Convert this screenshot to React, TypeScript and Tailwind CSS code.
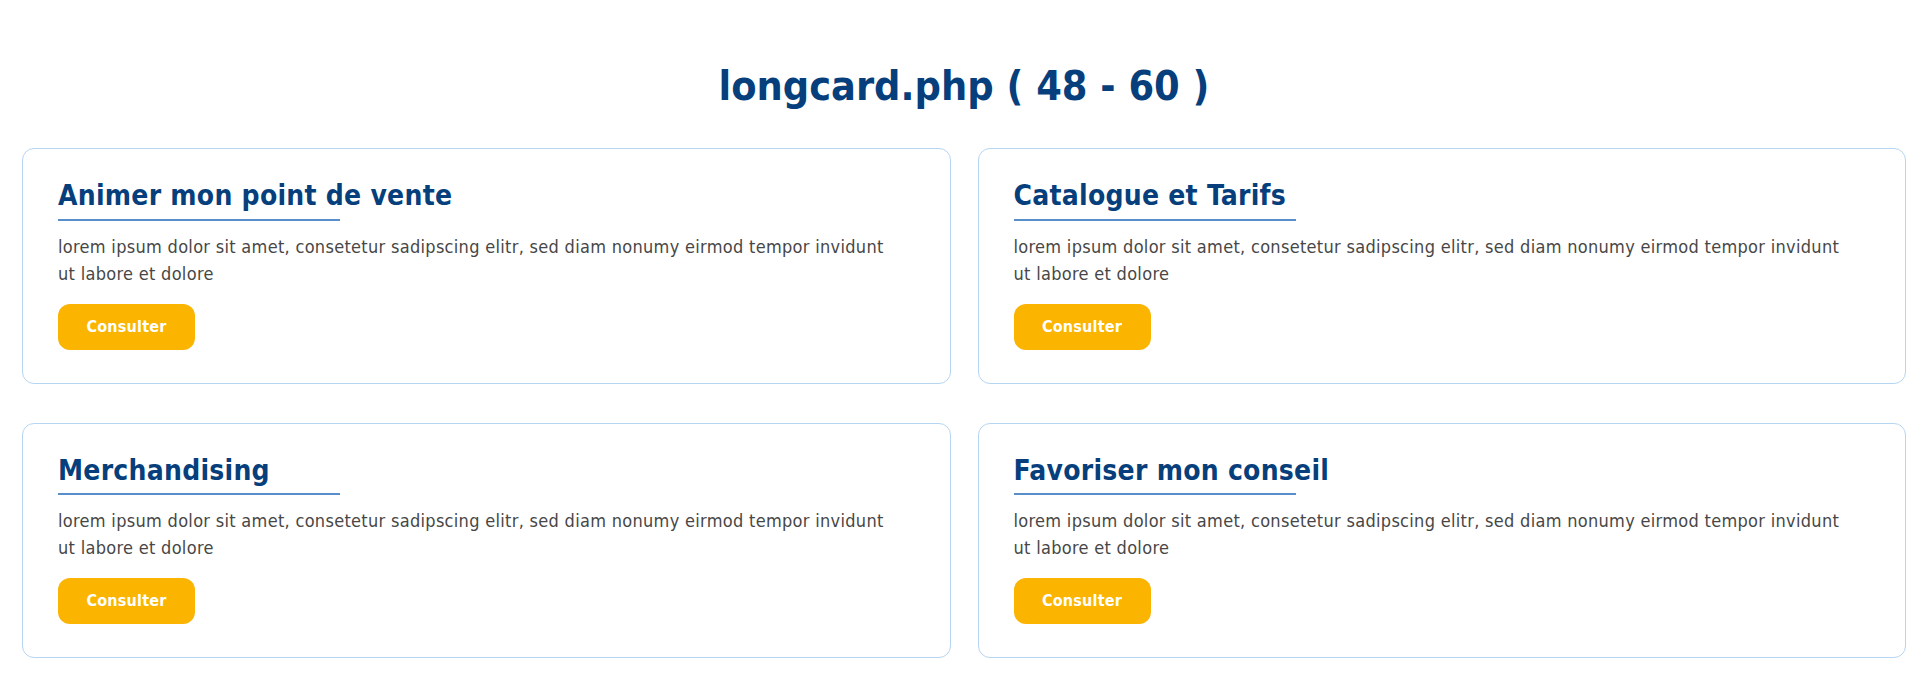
import React from "react";

const cards = [
  "Animer mon point de vente",
  "Catalogue et Tarifs",
  "Merchandising",
  "Favoriser mon conseil",
];

function Card({ title }: { title: string }) {
  return (
    <div className="rounded-[12px] border border-[#b5d5f3] bg-white pl-[35px] pr-[35px] pt-[30px] pb-[33px]">
      <h2 className="text-[28px] font-bold leading-[1.2] tracking-[0.25px] text-[#073f7c]">{title}</h2>
      <div className="mt-[6px] h-[2px] w-[282px] bg-[#5a8ecb]" />
      <p className="mt-[12px] text-[18px] leading-[27px] tracking-[0.3px] text-[#474747]">
        lorem ipsum dolor sit amet, consetetur sadipscing elitr, sed diam nonumy eirmod tempor invidunt
        <br />
        ut labore et dolore
      </p>
      <button className="mt-[17px] flex h-[46px] w-[137px] items-center justify-center rounded-[12px] bg-[#fbb400] text-[16px] font-bold tracking-[0.2px] text-white">
        Consulter
      </button>
    </div>
  );
}

export default function App() {
  return (
    <div className="min-h-[700px] bg-white pl-[22px] pr-[14px] font-['DejaVu_Sans_Condensed','DejaVu_Sans',sans-serif] font-stretch-condensed">
      <h1 className="pt-[62px] text-center text-[41px] font-bold leading-[1.2] text-[#073f7c]">
        longcard.php ( 48 - 60 )
      </h1>
      <div className="mt-[37px] grid grid-cols-2 gap-x-[27px] gap-y-[39px]">
        {cards.map((c) => (
          <Card key={c} title={c} />
        ))}
      </div>
    </div>
  );
}
